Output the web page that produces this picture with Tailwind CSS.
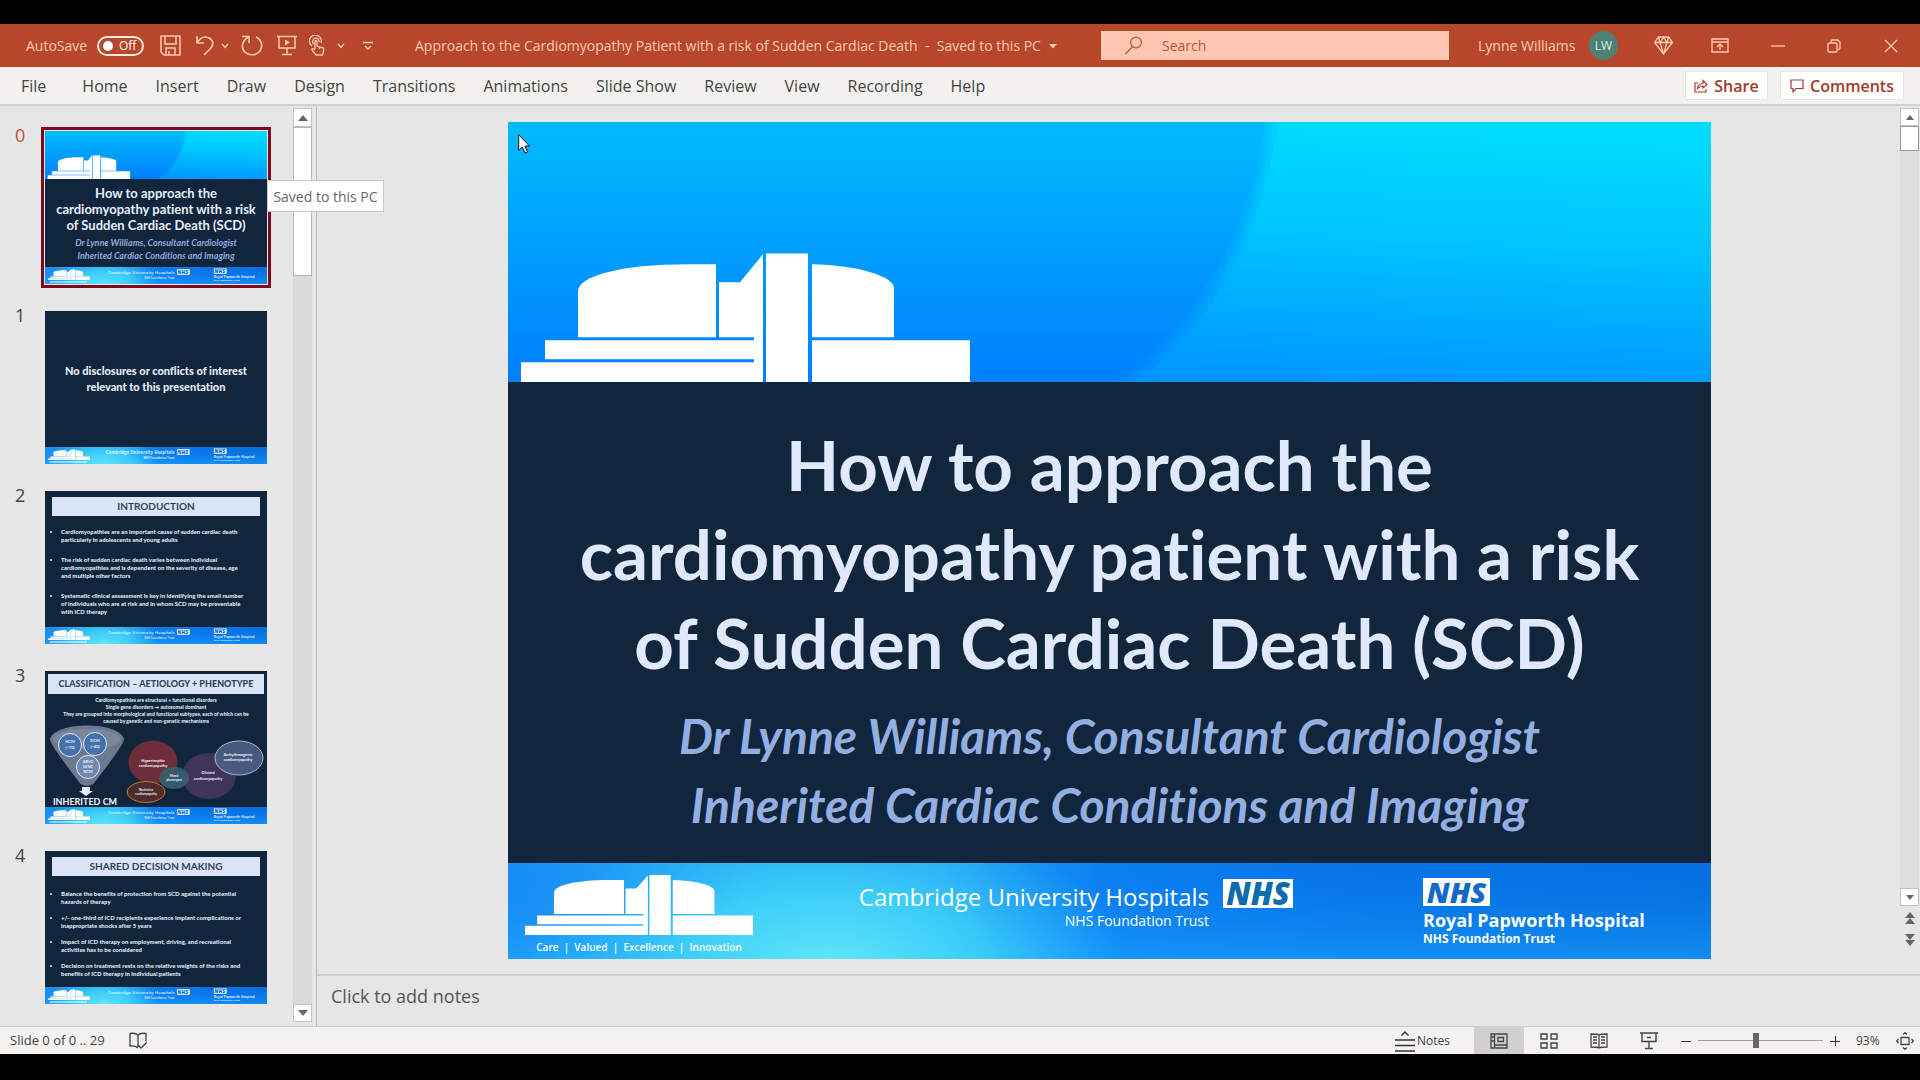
<!DOCTYPE html>
<html lang="en">
<head>
<meta charset="utf-8">
<title>Approach to the Cardiomyopathy Patient - PowerPoint</title>
<script src="https://cdn.jsdelivr.net/npm/@tailwindcss/browser@4"></script>
</head>
<body class="h-screen flex flex-col overflow-hidden bg-black pt-6 pb-[26px] font-['Open_Sans',sans-serif] text-[#444]">

<!-- Shared slide artwork -->
<svg class="absolute w-0 h-0" aria-hidden="true">
  <defs>
    <linearGradient id="skyL" x1="0" y1="0" x2="0" y2="1"><stop offset="0" stop-color="#00bcfc"/><stop offset="1" stop-color="#007eff"/></linearGradient>
    <linearGradient id="skyR" x1="0.1" y1="0" x2="0" y2="1"><stop offset="0" stop-color="#00dafe"/><stop offset="0.35" stop-color="#00c8ff"/><stop offset="1" stop-color="#0094ff"/></linearGradient>
    <linearGradient id="footBase" x1="0" y1="0" x2="1" y2="0"><stop offset="0" stop-color="#1b94fa"/><stop offset="0.2" stop-color="#30bdfa"/><stop offset="0.36" stop-color="#2cb4fa"/><stop offset="0.5" stop-color="#0b84f6"/><stop offset="0.7" stop-color="#0878ec"/><stop offset="1" stop-color="#0572e2"/></linearGradient>
    <radialGradient id="footGlow" gradientUnits="userSpaceOnUse" cx="0" cy="0" r="1" gradientTransform="translate(320 100) scale(300 150)"><stop offset="0" stop-color="#62e6fa"/><stop offset="0.5" stop-color="#45dbf9" stop-opacity="0.7"/><stop offset="1" stop-color="#30bdfa" stop-opacity="0"/></radialGradient>
    <linearGradient id="footLow" x1="0" y1="0" x2="0" y2="1"><stop offset="0" stop-color="#0060d8" stop-opacity="0.15"/><stop offset="1" stop-color="#20a8ff" stop-opacity="0.5"/></linearGradient>
  </defs>
  <symbol id="building" viewBox="13 131 449 129" preserveAspectRatio="none">
    <g fill="#fff">
      <path d="M70 215V169C70 154 112 142 180 142H208V215Z"/>
      <path d="M211 215V160H232L255 132V260H13V240H246V237H37V218H246V215Z"/>
      <path d="M258 131H300V260H258Z"/>
      <path d="M304 215V142C350 143 386 154 386 166V215Z"/>
      <path d="M304 218H462V260H304Z"/>
    </g>
  </symbol>
  <symbol id="banner" viewBox="0 0 1203 260" preserveAspectRatio="none">
    <path d="M0 0H1203V260H0Z" fill="url(#skyL)"/>
    <path d="M758 0C744 100 696 200 606 260H1203V0Z" fill="url(#skyR)" opacity="0.300"/>
    <path d="M764 0C750 100 704 200 616 260H1203V0Z" fill="url(#skyR)" opacity="0.500"/>
    <path d="M770 0C756 100 712 200 626 260H1203V0Z" fill="url(#skyR)"/>
    <use href="#building" x="13" y="131" width="449" height="129"/>
  </symbol>
  <symbol id="footbg" viewBox="0 0 1203 96" preserveAspectRatio="none">
    <path d="M0 0H1203V96H0Z" fill="url(#footBase)"/>
    <path d="M0 0H1203V96H0Z" fill="url(#footLow)"/>
    <path d="M0 0H1203V96H0Z" fill="url(#footGlow)"/>
  </symbol>
</svg>

<!-- Footer strip repeated at the bottom of each thumbnail -->
<template id="thumb-footer">
  <svg class="w-full h-[17px] shrink-0 mt-auto" viewBox="0 0 1203 92" font-family="Open Sans" fill="#fff">
    <use href="#footbg" width="1203" height="92"/>
    <use href="#building" x="17" y="12" width="228" height="58"/>
    <path d="M25 78H228V84H25ZM715 12H784V42H715ZM915 8H984V36H915Z"/>
    <text x="702" y="38" text-anchor="end" font-size="23" fill-opacity="0.700">Cambridge University Hospitals</text>
    <text x="702" y="64" text-anchor="end" font-size="15" fill-opacity="0.700">NHS Foundation Trust</text>
    <text x="915" y="58" font-size="18" font-weight="700" fill-opacity="0.800">Royal Papworth Hospital</text>
    <text x="915" y="78" font-size="13" font-weight="700" fill-opacity="0.800">NHS Foundation Trust</text>
    <g fill="#0a6cc0" font-size="29" font-weight="800" font-style="italic"><text x="717" y="38">NHS</text><text x="917" y="33">NHS</text></g>
  </svg>
</template>

<!-- Title bar -->
<header class="h-[43px] shrink-0 bg-[#b7472a] text-[#ffc9b3] flex items-center text-[14px] whitespace-nowrap">
  <label for="autosave" class="ml-[26px] w-[71px]">AutoSave</label>
  <button id="autosave" role="switch" aria-checked="false" class="w-[47px] h-5 rounded-full border-2 border-[#ffe9e0] flex items-center gap-1.5 pl-1 text-[12px] text-white"><span class="size-2.5 rounded-full bg-white"></span>Off</button>
  <div class="flex items-center ml-4 w-[214px]">
    <button aria-label="Save"><svg class="size-[21px]" viewBox="0 0 21 21" fill="none" stroke="currentColor" stroke-width="1.5"><path d="M1 1H20V20H4L1 17ZM5 1V9H16V1M6 20V13H15V20M9 16V20"/></svg></button>
    <button aria-label="Undo" class="ml-3.5"><svg class="w-5 h-[21px]" viewBox="0 0 20 21" fill="none" stroke="currentColor" stroke-width="1.6"><path d="M2 1V8H9M2 8C5 3 9 1 13 2.500C19 5 19 10 15 14L9 20"/></svg></button>
    <button aria-label="Undo options" class="ml-1.5"><svg class="w-2 h-2" viewBox="0 0 8 8" fill="none" stroke="currentColor" stroke-width="1.400"><path d="M1 2L4 5.500L7 2"/></svg></button>
    <button aria-label="Redo" class="ml-3"><svg class="w-[22px] h-[21px]" viewBox="0 0 22 21" fill="none" stroke="currentColor" stroke-width="1.6"><path d="M1 1.500H8V8M8 2C1 5 0 12 3 16C7 21 15 21 19 16C22 11 21 5 15 2"/></svg></button>
    <button aria-label="Start from beginning" class="ml-3.5"><svg class="w-5 h-[21px]" viewBox="0 0 20 21" fill="none" stroke="currentColor" stroke-width="1.5"><path d="M0 1.500H20M2 1.500V13H18V1.500M10 13V19.500M5 19.500H15"/><path d="M8 4.500L13 7.500L8 10.500Z" fill="currentColor" stroke="none"/></svg></button>
    <button aria-label="Touch mode" class="ml-3"><svg class="w-4 h-[21px]" viewBox="0 0 16 21" fill="none" stroke="currentColor" stroke-width="1.300"><path d="M3 11A6 6 0 1 1 12 8M5 9A3.200 3.200 0 1 1 10 7M6 14V6.500C6 5 8 5 8 6.500V11L13 12.500C15 13 15 14 14.500 16L13.500 20H7L3 15C2.500 13.500 4 13 6 15M10.500 12V14"/></svg></button>
    <button aria-label="Touch mode options" class="ml-3"><svg class="w-2 h-2" viewBox="0 0 8 8" fill="none" stroke="currentColor" stroke-width="1.400"><path d="M1 2L4 5.500L7 2"/></svg></button>
    <button aria-label="Customize toolbar" class="ml-[18px]"><svg class="w-2.5 h-2.5" viewBox="0 0 10 10" fill="none" stroke="currentColor" stroke-width="1.400"><path d="M0 1.500H10M2 5L5 8L8 5"/></svg></button>
  </div>
  <button class="ml-[41px] flex items-center gap-2"><span>Approach to the Cardiomyopathy Patient with a risk of Sudden Cardiac Death &nbsp;-&nbsp; Saved to this PC</span><svg class="w-2 h-1.5" viewBox="0 0 8 6"><path d="M0 1H8L4 5.500Z" fill="currentColor"/></svg></button>
  <label class="ml-auto w-[348px] h-[29px] bg-[#ffc7b1] text-[#b7573f] flex items-center pl-6 gap-5"><svg class="w-[17px] h-[19px] shrink-0" viewBox="0 0 17 19" fill="none" stroke="currentColor" stroke-width="1.200"><circle cx="11" cy="6.500" r="5.300"/><path d="M7.500 10.500L0.500 18"/></svg><input type="search" aria-label="Search" placeholder="Search" class="w-full bg-transparent outline-none placeholder:text-[#b7573f] placeholder:opacity-100"></label>
  <div class="flex items-center ml-[29px] mr-[22px]">
    <span class="w-[111px]">Lynne Williams</span>
    <span class="size-[29px] rounded-full bg-[#4f8074] text-[#d5efe8] text-xs flex items-center justify-center">LW</span>
    <button aria-label="Premium" class="ml-9"><svg class="w-[19px] h-[19px]" viewBox="0 0 19 19" fill="none" stroke="currentColor" stroke-width="1.300"><path d="M4.500 1H14.500L18.300 6.500L9.500 18L0.700 6.500ZM0.700 6.500H18.300M6 6.500L9.500 18L13 6.500L9.500 1ZM6 6.500L4.500 1M13 6.500L14.500 1"/></svg></button>
    <button aria-label="Ribbon display options" class="ml-[38px]"><svg class="w-[18px] h-[15px]" viewBox="0 0 18 15" fill="none" stroke="currentColor" stroke-width="1.300"><path d="M1 1H17V14H1ZM1 4H17M9 12V6.500M6 9L9 6L12 9"/></svg></button>
    <button aria-label="Minimize" class="ml-[42px]"><svg class="w-3.5 h-3.5" viewBox="0 0 14 14" stroke="currentColor" stroke-width="1.300"><path d="M0 7H14"/></svg></button>
    <button aria-label="Restore" class="ml-[42px]"><svg class="w-3.5 h-3.5" viewBox="0 0 14 14" fill="none" stroke="currentColor" stroke-width="1.300"><rect x="1" y="4" width="9" height="9" rx="1"/><path d="M4 3.500V2.500L5 1H11L13 3V9L12 10.500H10.500"/></svg></button>
    <button aria-label="Close" class="ml-[43px]"><svg class="w-3.5 h-3.5" viewBox="0 0 14 14" stroke="currentColor" stroke-width="1.300"><path d="M1 1L13 13M13 1L1 13"/></svg></button>
  </div>
</header>

<!-- Ribbon tabs -->
<nav class="h-[39px] shrink-0 bg-[#f3f1ef] border-b-2 border-[#d4d2d0] flex items-center text-base whitespace-nowrap pl-[7px] pr-4">
  <button class="pl-3.5 pr-[22px]">File</button>
  <button class="px-3.5">Home</button>
  <button class="px-3.5">Insert</button>
  <button class="px-3.5">Draw</button>
  <button class="px-3.5">Design</button>
  <button class="px-3.5">Transitions</button>
  <button class="px-3.5">Animations</button>
  <button class="px-3.5">Slide Show</button>
  <button class="px-3.5">Review</button>
  <button class="px-3.5">View</button>
  <button class="px-3.5">Recording</button>
  <button class="px-3.5">Help</button>
  <button class="ml-auto h-[29px] w-[83px] bg-white border border-[#e8e4e1] text-[#a4392a] font-semibold flex items-center justify-center gap-1.5"><svg class="w-3.5 h-3.5" viewBox="0 0 14 14" fill="none" stroke="currentColor" stroke-width="1.200"><path d="M4 4H1V13H12V10M3.500 9.500C4 6 6 4.500 9 4.500V1.500L13 5.500L9 9V7C6.500 7 5 8 3.500 9.500Z"/></svg>Share</button>
  <button class="ml-3 h-[29px] w-[124px] bg-white border border-[#e8e4e1] text-[#a4392a] font-semibold flex items-center justify-center gap-1.5"><svg class="w-3.5 h-3.5" viewBox="0 0 14 14" fill="none" stroke="currentColor" stroke-width="1.200"><path d="M1 1H13V9.500H6L3 13V9.500H1Z"/></svg>Comments</button>
</nav>

<main class="flex-1 min-h-0 flex bg-[#e6e6e6]">
  <!-- Slide thumbnails -->
  <aside class="relative w-[317px] shrink-0 flex border-r border-[#b9b9b9]">
    <ol class="flex-1 min-w-0 pl-[15px] pt-[25px] flex flex-col gap-[27px] text-lg leading-2 overflow-hidden [font-variant-ligatures:none]">
      <li class="flex gap-5">
        <span class="w-2.5 text-[#cf4a35]">0</span>
        <div data-thumb class="w-[222px] h-[153px] flex flex-col bg-[#11253d] outline-[3px] outline-offset-1 outline-[#7c0a1e] font-['Lato',sans-serif] font-bold text-center whitespace-nowrap">
          <svg class="w-full h-12 shrink-0"><use href="#banner" width="222" height="48"/></svg>
          <p class="mt-1.5 text-[13px] leading-4 text-[#e6eefb]">How to approach the<br>cardiomyopathy patient with a risk<br>of Sudden Cardiac Death (SCD)</p>
          <p class="mt-[3px] text-[9px] leading-[13px] italic text-[#8fabdd]">Dr Lynne Williams, Consultant Cardiologist<br>Inherited Cardiac Conditions and Imaging</p>
        </div>
      </li>
      <li class="flex gap-5">
        <span class="w-2.5">1</span>
        <div data-thumb class="w-[222px] h-[153px] flex flex-col bg-[#11253d] font-['Lato',sans-serif] font-black text-center whitespace-nowrap">
          <p class="mt-[52px] text-[11px] leading-4 text-[#e6eefb]">No disclosures or conflicts of interest<br>relevant to this presentation</p>
        </div>
      </li>
      <li class="flex gap-5">
        <span class="w-2.5">2</span>
        <div data-thumb class="w-[222px] h-[153px] flex flex-col bg-[#11253d] font-['Lato',sans-serif] font-bold whitespace-nowrap">
          <h3 class="mx-[7px] mt-1.5 h-[19px] bg-[#dbe5f7] text-[#33415f] text-[10px] leading-[18px] text-center">INTRODUCTION</h3>
          <ul class="mt-3 px-4 list-disc text-[6px] leading-2 font-black text-[#dfe8f6] flex flex-col gap-3">
            <li>Cardiomyopathies are an important cause of sudden cardiac death<br>particularly in adolescents and young adults</li>
            <li>The risk of sudden cardiac death varies between individual<br>cardiomyopathies and is dependent on the severity of disease, age<br>and multiple other factors</li>
            <li>Systematic clinical assessment is key in identifying the small number<br>of individuals who are at risk and in whom SCD may be preventable<br>with ICD therapy</li>
          </ul>
        </div>
      </li>
      <li class="flex gap-5">
        <span class="w-2.5">3</span>
        <div data-thumb class="w-[222px] h-[153px] flex flex-col bg-[#11253d] font-['Lato',sans-serif] font-bold whitespace-nowrap">
          <h3 class="mx-[3px] mt-[3px] h-5 bg-[#dbe5f7] text-[#33415f] text-[9px] leading-[19px] font-black text-center">CLASSIFICATION – AETIOLOGY + PHENOTYPE</h3>
          <p class="mt-[3px] text-[5px] leading-[7px] font-black text-center text-[#dfe8f6]">Cardiomyopathies are structural + functional disorders<br>Single gene disorders → autosomal dominant<br>They are grouped into morphological and functional subtypes, each of which can be<br>caused by genetic and non-genetic mechanisms</p>
          <svg class="w-full flex-1 min-h-0" viewBox="0 54 222 82" font-family="Lato" font-weight="700" fill="#eef3fb" font-size="4" text-anchor="middle">
            <path d="M5 68C10 50 74 50 79 68C79 74 55 104 50 111C47 116 37 116 34 111C29 104 5 74 5 68Z" fill="#6c7a90"/>
            <ellipse cx="42" cy="68" rx="34" ry="10" fill="#8793a6" opacity="0.500"/>
            <g stroke="#dfe8f5" stroke-width="1"><circle cx="25" cy="74" r="11.500" fill="#4470ad"/><circle cx="50" cy="73" r="11.500" fill="#4470ad"/><circle cx="43" cy="96" r="11.500" fill="#7088ae"/></g>
            <text x="25" y="72">HCM</text><text x="25" y="78">(~70)</text><text x="50" y="71">DCM</text><text x="50" y="77">(~40)</text><text x="43" y="92">ARVC</text><text x="43" y="97">LVNC</text><text x="43" y="102">RCM</text>
            <path d="M37 116H45V120H48L41 125L34 120H37Z" fill="#e6eefb"/>
            <text x="40" y="134" font-size="9">INHERITED CM</text>
            <ellipse cx="108" cy="91" rx="24.500" ry="21.500" fill="#6f2c3a"/>
            <ellipse cx="164" cy="105" rx="27" ry="23" fill="#403459"/>
            <ellipse cx="194" cy="87" rx="24" ry="17" fill="#50638a" fill-opacity="0.850" stroke="#a9b8d2"/>
            <ellipse cx="129" cy="107" rx="15" ry="11" fill="#35606f" fill-opacity="0.900"/>
            <ellipse cx="101" cy="121" rx="19" ry="10.500" fill="#4d2d2a" stroke="#c87828"/>
            <text x="108" y="91">Hypertrophic</text><text x="108" y="96">cardiomyopathy</text>
            <text x="163" y="103">Dilated</text><text x="163" y="109">cardiomyopathy</text>
            <text x="193" y="85">Arrhythmogenic</text><text x="193" y="90">cardiomyopathy</text>
            <text x="129" y="106" font-size="3">Mixed</text><text x="129" y="110" font-size="3">phenotypes</text>
            <text x="101" y="120" font-size="3">Restrictive</text><text x="101" y="124" font-size="3">cardiomyopathy</text>
          </svg>
        </div>
      </li>
      <li class="flex gap-5">
        <span class="w-2.5">4</span>
        <div data-thumb class="w-[222px] h-[153px] flex flex-col bg-[#11253d] font-['Lato',sans-serif] font-bold whitespace-nowrap">
          <h3 class="mx-[7px] mt-1.5 h-[19px] bg-[#dbe5f7] text-[#33415f] text-[10px] leading-[18px] text-center">SHARED DECISION MAKING</h3>
          <ul class="mt-3.5 px-4 list-disc text-[6px] leading-2 font-black text-[#dfe8f6] flex flex-col gap-2">
            <li>Balance the benefits of protection from SCD against the potential<br>hazards of therapy</li>
            <li>+/- one-third of ICD recipients experience implant complications or<br>inappropriate shocks after 5 years</li>
            <li>Impact of ICD therapy on employment, driving, and recreational<br>activities has to be considered</li>
            <li>Decision on treatment rests on the relative weights of the risks and<br>benefits of ICD therapy in individual patients</li>
          </ul>
        </div>
      </li>
    </ol>
    <div class="w-[19px] mr-1 mt-0.5 mb-1 bg-[#dadada] flex flex-col">
      <button aria-label="Scroll up" class="h-[19px] bg-white border border-[#c4c4c4] flex items-center justify-center"><svg class="w-2.5 h-1.5" viewBox="0 0 10 6"><path d="M0 6L5 0L10 6Z" fill="#666"/></svg></button>
      <div class="h-[149px] bg-white border border-[#b4b4b4]"></div>
      <button aria-label="Scroll down" class="mt-auto h-[18px] bg-white border border-[#c4c4c4] flex items-center justify-center"><svg class="w-2.5 h-1.5" viewBox="0 0 10 6"><path d="M0 0L5 6L10 0Z" fill="#666"/></svg></button>
    </div>
    <div role="tooltip" class="absolute left-[267px] top-[74px] w-[117px] h-8 bg-white border border-[#c8c8c8] text-[14px] text-[#666] flex items-center justify-center whitespace-nowrap">Saved to this PC</div>
  </aside>

  <!-- Editing area -->
  <section class="flex-1 min-w-0 flex flex-col">
    <div class="flex-1 min-h-0 flex">
      <div class="flex-1 min-w-0 pl-[191px] pr-[189px] pt-4 pb-[15px]">
        <article class="relative h-full flex flex-col bg-[#11253d] font-['Lato',sans-serif] font-bold text-center whitespace-nowrap [font-variant-ligatures:none]">
          <svg class="w-full flex-[260] min-h-0" viewBox="0 0 1203 260" preserveAspectRatio="none"><use href="#banner" width="1203" height="260"/></svg>
          <div class="flex-[480] min-h-0">
            <h1 class="mt-[38px] text-[69px] leading-[89px] text-[#dfe9fa]">How to approach the<br>cardiomyopathy patient with a risk<br>of Sudden Cardiac Death (SCD)</h1>
            <p class="mt-3.5 text-[48px] leading-[69px] italic text-[#93afe2]">Dr Lynne Williams, Consultant Cardiologist<br>Inherited Cardiac Conditions and Imaging</p>
          </div>
          <footer class="relative flex-[96] min-h-0 font-['Open_Sans',sans-serif] text-white">
            <svg class="absolute inset-0 size-full" viewBox="0 0 1203 96" preserveAspectRatio="none"><use href="#footbg" width="1203" height="96"/></svg>
            <div class="relative flex items-start pl-[17px] pr-[67px]">
              <div class="w-[228px] mt-3"><svg class="w-full h-[60px]" viewBox="0 0 228 60"><use href="#building" width="228" height="60"/></svg><p class="mt-1 text-[10px] leading-4 font-semibold">Care &nbsp;|&nbsp; Valued &nbsp;|&nbsp; Excellence &nbsp;|&nbsp; Innovation</p></div>
              <div class="ml-auto mt-5 text-right font-normal"><p class="text-[24px] leading-7">Cambridge University Hospitals</p><p class="text-[14px] leading-5">NHS Foundation Trust</p></div>
              <div class="ml-3.5 mt-4 w-[70px] h-[29px] bg-white text-[#0b6cae] text-[31px] leading-[29px] font-extrabold italic text-center">NHS</div>
              <div class="ml-[130px] mt-[15px] w-[221px] text-left"><div class="w-[67px] h-7 bg-white text-[#1268cc] text-[29px] leading-7 font-extrabold italic text-center">NHS</div><p class="mt-0.5 text-[18px] leading-6">Royal Papworth Hospital</p><p class="text-[12px] leading-3.5">NHS Foundation Trust</p></div>
            </div>
          </footer>
          <svg class="absolute left-2.5 top-3 w-3 h-5" viewBox="0 0 12 20"><path d="M0.700 0.700V16.500L4.300 13L7 19L9.500 18L7 12H11.500Z" fill="#fff" stroke="#111" stroke-width="1"/></svg>
        </article>
      </div>
      <div class="w-[19px] mr-px mt-0.5 flex flex-col items-stretch">
        <button aria-label="Scroll up" class="h-[18px] bg-white border border-[#c4c4c4] flex items-center justify-center"><svg class="w-2 h-[5px]" viewBox="0 0 10 6"><path d="M0 6L5 0L10 6Z" fill="#666"/></svg></button>
        <div class="h-[25px] bg-white border border-[#999]"></div>
        <div class="flex-1 bg-[#dedede]"></div>
        <button aria-label="Scroll down" class="h-[18px] bg-white border border-[#c4c4c4] flex items-center justify-center"><svg class="w-2 h-[5px]" viewBox="0 0 10 6"><path d="M0 0L5 6L10 0Z" fill="#666"/></svg></button>
        <button aria-label="Previous slide" class="h-6 flex items-center justify-center"><svg class="w-2.5 h-3" viewBox="0 0 10 12"><path d="M0 6L5 0L10 6ZM0 12L5 6L10 12Z" fill="#666"/></svg></button>
        <button aria-label="Next slide" class="h-5 mb-6 flex items-center justify-center"><svg class="w-2.5 h-3" viewBox="0 0 10 12"><path d="M0 0L5 6L10 0ZM0 6L5 12L10 6Z" fill="#666"/></svg></button>
      </div>
    </div>
    <textarea aria-label="Notes" placeholder="Click to add notes" class="h-[52px] shrink-0 block w-full resize-none border-t-2 border-[#cfcfcf] bg-transparent px-3.5 pt-1.5 text-lg leading-7 outline-none placeholder:text-[#555] placeholder:opacity-100"></textarea>
  </section>
</main>

<!-- Status bar -->
<footer class="h-7 shrink-0 bg-[#f3f2f0] border-t border-[#cfcfcf] flex items-center text-[12px] whitespace-nowrap pl-2.5 pr-1.5">
  <span class="text-[13px]">Slide 0 of 0 .. 29</span>
  <button aria-label="Spelling" class="ml-6"><svg class="w-[18px] h-[18px]" viewBox="0 0 18 18" fill="none" stroke="#444" stroke-width="1.300"><path d="M9 3V15M9 3C7 1 4 1 1 1.500V14C4 13.500 7 14 9 16M9 3C11 1 14 1 17 1.500V9M9 13L12 16L18 10"/></svg></button>
  <button class="ml-auto flex items-center"><svg class="w-5 h-[22px] mr-0.5" viewBox="0 0 20 22" fill="none" stroke="#333" stroke-width="1.500"><path d="M0 10H20M0 15.500H20M0 21H20M6.500 5.500L10 2L13.500 5.500"/></svg>Notes</button>
  <div class="flex h-full ml-6">
    <button aria-label="Normal view" class="w-[50px] bg-[#d2d0ce] flex items-center justify-center"><svg class="w-[18px] h-4" viewBox="0 0 18 16" fill="none" stroke="#444" stroke-width="1.300"><path d="M1 1H17V15H1ZM4.500 1V15M4.500 12H17M8 4.500H13.500V8.500H8ZM1 4H4M1 8H4"/></svg></button>
    <button aria-label="Slide sorter" class="w-[50px] flex items-center justify-center"><svg class="w-[18px] h-4" viewBox="0 0 18 16" fill="none" stroke="#444" stroke-width="1.400"><path d="M1 1H7V6H1ZM11 1H17V6H11ZM1 10H7V15H1ZM11 10H17V15H11Z"/></svg></button>
    <button aria-label="Reading view" class="w-[50px] flex items-center justify-center"><svg class="w-[18px] h-4" viewBox="0 0 18 16" fill="none" stroke="#444" stroke-width="1.300"><path d="M9 2V15M9 2C7 1 4 1 1 1V14C4 14 7 14 9 15C11 14 14 14 17 14V1C14 1 11 1 9 2M3 4H7M3 7H7M3 10H7M11 4H15M11 7H15M11 10H15"/></svg></button>
    <button aria-label="Slide show" class="w-[50px] flex items-center justify-center"><svg class="w-[18px] h-[18px]" viewBox="0 0 18 18" fill="none" stroke="#444" stroke-width="1.400"><path d="M0 1H18M2 1V9.500H16V1M9 9.500V16.500M5 16.500H13M7 5.500H11"/></svg></button>
  </div>
  <button aria-label="Zoom out" class="ml-[7px]"><svg class="w-2.5 h-2.5" viewBox="0 0 10 10" stroke="#333"><path d="M0 5.500H10"/></svg></button>
  <input type="range" aria-label="Zoom" min="10" max="190" value="93" class="mx-[7px] w-[125px] h-[15px] appearance-none bg-transparent bg-[linear-gradient(#a0a0a0,#a0a0a0)] bg-[length:100%_1px] bg-center bg-no-repeat [&::-webkit-slider-thumb]:appearance-none [&::-webkit-slider-thumb]:w-1.5 [&::-webkit-slider-thumb]:h-[15px] [&::-webkit-slider-thumb]:bg-[#666]">
  <button aria-label="Zoom in"><svg class="w-2.5 h-2.5" viewBox="0 0 10 10" stroke="#333"><path d="M0 5.500H10M5.500 0V10"/></svg></button>
  <button class="ml-4 w-10 text-left">93%</button>
  <button aria-label="Fit slide to window"><svg class="w-[18px] h-[18px]" viewBox="0 0 18 18" fill="none" stroke="#444" stroke-width="1.300"><path d="M5 5.500H13V12.500H5ZM7 2.500L9 0.700L11 2.500M7 15.500L9 17.300L11 15.500M2.500 7L0.700 9L2.500 11M15.500 7L17.300 9L15.500 11"/></svg></button>
</footer>

<script>
  const strip = document.getElementById('thumb-footer');
  document.querySelectorAll('[data-thumb]').forEach(t => t.append(strip.content.cloneNode(true)));
</script>
</body>
</html>
